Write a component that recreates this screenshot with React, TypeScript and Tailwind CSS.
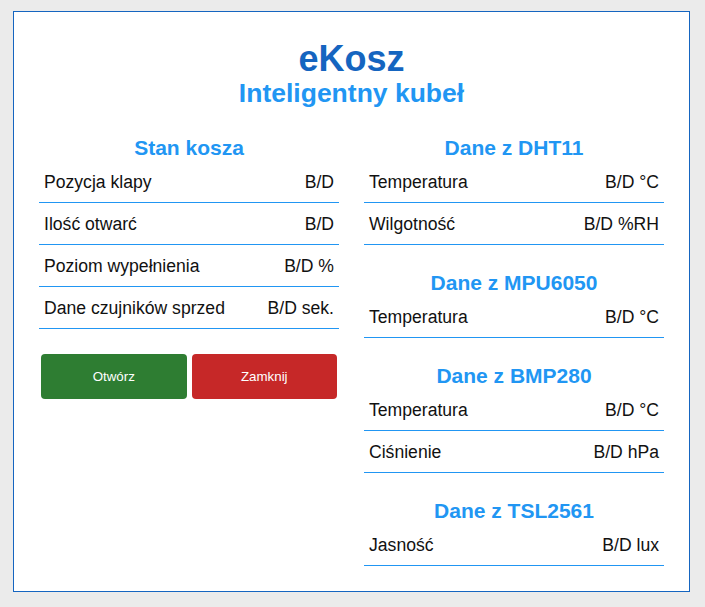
import React from "react";

type Row = { label: string; value: string };

function Section({ title, rows, first }: { title: string; rows: Row[]; first?: boolean }) {
  return (
    <div className={first ? "" : "mt-[26px]"}>
      <h3 className="text-center text-[21px] leading-[24px] font-bold text-[#2196f3] mb-[1px]">{title}</h3>
      {rows.map((r, i) => (
        <div
          key={i}
          className="flex justify-between items-start pt-[11px] pb-[10px] px-[5px] border-b border-[#2196f3] text-[17.6px] leading-[20px] text-[#111]"
        >
          <span>{r.label}</span>
          <span>{r.value}</span>
        </div>
      ))}
    </div>
  );
}

export default function App() {
  return (
    <div
      className="min-h-[607px] bg-[#ebebeb] pt-[11px] pl-[13px]"
      style={{ fontFamily: '"Liberation Sans", Arial, sans-serif' }}
    >
      <div className="w-[677px] bg-white border border-[#1565c0] pt-[26px] px-[25px] pb-[25px]">
        <h1 className="text-center text-[36px] leading-[41px] font-bold text-[#1565c0]">eKosz</h1>
        <h2 className="text-center text-[26.5px] leading-[30px] font-bold text-[#2196f3] mt-[-1px]">Inteligentny kubeł</h2>
        <div className="mt-[28px] grid grid-cols-[300px_300px] gap-x-[25px] items-start">
          <div>
            <Section
              first
              title="Stan kosza"
              rows={[
                { label: "Pozycja klapy", value: "B/D" },
                { label: "Ilość otwarć", value: "B/D" },
                { label: "Poziom wypełnienia", value: "B/D %" },
                { label: "Dane czujników sprzed", value: "B/D sek." },
              ]}
            />
            <div className="mt-[25px] flex gap-[5px] px-[2px]">
              <button className="flex-1 h-[45px] rounded-[4px] bg-[#2e7d32] text-white text-[13.33px]">Otwórz</button>
              <button className="flex-1 h-[45px] rounded-[4px] bg-[#c62828] text-white text-[13.33px]">Zamknij</button>
            </div>
          </div>
          <div>
            <Section
              first
              title="Dane z DHT11"
              rows={[
                { label: "Temperatura", value: "B/D °C" },
                { label: "Wilgotność", value: "B/D %RH" },
              ]}
            />
            <Section title="Dane z MPU6050" rows={[{ label: "Temperatura", value: "B/D °C" }]} />
            <Section
              title="Dane z BMP280"
              rows={[
                { label: "Temperatura", value: "B/D °C" },
                { label: "Ciśnienie", value: "B/D hPa" },
              ]}
            />
            <Section title="Dane z TSL2561" rows={[{ label: "Jasność", value: "B/D lux" }]} />
          </div>
        </div>
      </div>
    </div>
  );
}
